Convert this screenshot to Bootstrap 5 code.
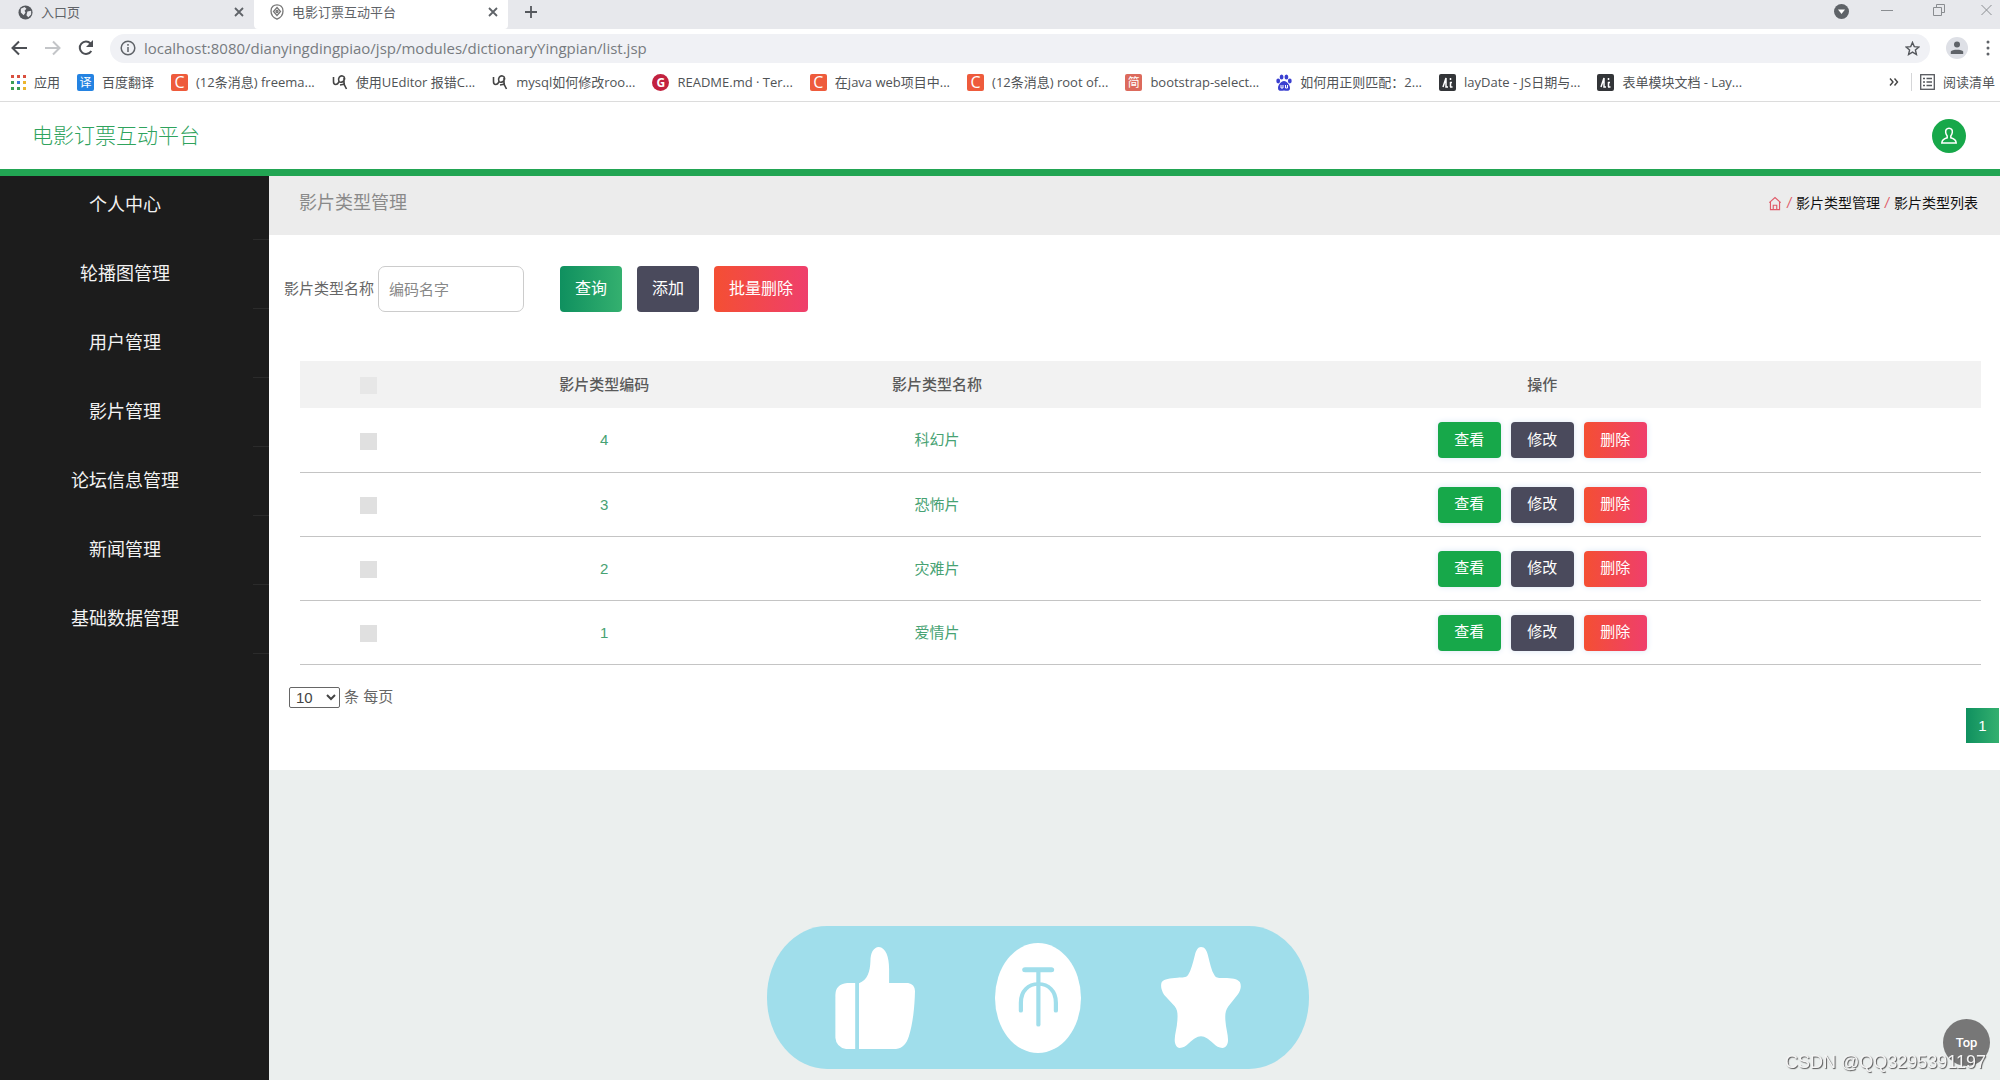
<!DOCTYPE html>
<html lang="zh-CN">
<head>
<meta charset="utf-8">
<meta name="viewport" content="width=device-width, initial-scale=1">
<title>电影订票互动平台</title>
<link href="https://cdn.jsdelivr.net/npm/bootstrap@5.3.0/dist/css/bootstrap.min.css" rel="stylesheet">
<style>
  body { font-family: "Liberation Sans", "Noto Sans CJK SC", sans-serif; font-size: 15px; line-height: 20px; color: #666; background: #ebefee; }
  svg { display: block; flex: none; }

  /* browser window */
  .browser { font-family: "Open Sans", "Noto Sans CJK SC", sans-serif; color: #5f6368; background: #fff; border-bottom: 1px solid #dcdcdc; }
  .browser button, .browser a { color: inherit; background: none; border: 0; padding: 0; text-decoration: none; }
  .tabstrip { height: 29px; background: #e7e8ec; padding-bottom: 5px; }
  .tab-item { width: 254px; height: 24px; font-size: 13px; padding: 0 9px 0 18px; }
  .tab-live { height: 29px; background: #fff; padding-bottom: 5px; border-radius: 0 0 4px 4px; }
  .toolbar { height: 38px; padding: 0 8px 0 10px; }
  .omnibox { height: 29px; background: #f0f1f5; border-radius: 15px; padding: 0 10px; margin-left: 16px; }
  .omnibox input { font-size: 15px; color: #777b80; background: none; border: 0; outline: 0; min-width: 0; padding: 0; }
  .browser .profile { width: 22px; height: 22px; border-radius: 50%; background: #dee0e6; }
  .bookmarks { height: 34px; padding: 0 5px 4px 11px; font-size: 13px; color: #505356; }
  .fav { width: 17px; height: 17px; border-radius: 2px; color: #fff; font-size: 12px; line-height: 17px; text-align: center; flex: none; }
  .fav-c { background: #ee5b3c; font-size: 16px; }
  .fav-y { background: #2483e2; }
  .fav-j { background: #dc6a5c; }
  .fav-g { background: #c2213f; border-radius: 50%; font-weight: 700; }
  .gap-bm { gap: 17px; }
  .bm-rule { width: 1px; height: 18px; background: #d5d6d8; }

  /* site header */
  .site-top { height: 74px; background: #fff; border-bottom: 7px solid #22a553; padding: 0 34px 0 32px; }
  .site-name { font-size: 21px; line-height: 28px; color: #2fa35d; text-decoration: none; font-weight: 300; }
  .avatar { width: 34px; height: 34px; border: 0; border-radius: 50%; background: #17a84a; }

  /* side menu */
  .side { width: 269px; background: #1c1c1c; flex: none; }
  .side a { display: block; font-size: 18px; line-height: 27px; padding: 21px 19px 21px 0; color: #f2f2f2; text-align: center; text-decoration: none; background: linear-gradient(#2b2b2b, #2b2b2b) right bottom / 16px 1px no-repeat; }
  .side li:first-child a { padding-top: 16px; }

  /* content */
  .title-bar { height: 59px; background: #ececec; padding: 0 22px 5px 30px; }
  .title-bar h1 { font-size: 18px; line-height: 24px; color: #8a8a8a; font-weight: 400; }
  .crumbs { font-size: 14px; color: #e05a68; gap: 5px; }
  .crumbs a, .crumbs span { color: #111; text-decoration: none; }
  .panel { background: #fff; }
  .search { padding: 31px 15px 0; }
  .search input { width: 146px; height: 46px; font-size: 15px; border-color: #ccc; border-radius: 7px; padding: 0 10px; }
  .search input::placeholder { color: #888; }
  .btn-tool { height: 46px; border: 0; border-radius: 4px; padding: 0 15px; font-size: 16px; color: #fff; }
  .btn-op { width: 63px; height: 36px; border: 0; border-radius: 4px; padding: 0; font-size: 15px; color: #fff; box-shadow: 0 0 6px #dbe6f4; }
  .gap-tool { gap: 15px; }
  .gap-op { gap: 10px; }
  .fill-query { background: linear-gradient(90deg, #0f905f, #34b06f); }
  .fill-dark { background: #4a4a5c; }
  .fill-red { background: linear-gradient(90deg, #f44f33, #ef3f6c); }
  .fill-green { background: #17a84a; }
  .list-wrap { padding: 49px 19px 0 31px; }
  .type-table { table-layout: fixed; margin: 0; text-align: center; vertical-align: middle; --bs-table-bg: transparent; }
  .type-table th { height: 47px; padding: 0; background: #f2f2f2; border: 0; color: #5a5a5a; font-weight: 500; vertical-align: middle; }
  .type-table td { height: 64px; padding: 1px 0 0; border-bottom: 1px solid #c4c4c4; color: #47a273; }
  .type-table .form-check-input { width: 17px; height: 17px; margin: 0; border: 0; border-radius: 0; background-color: #e0e0e0; vertical-align: middle; }
  .type-table th .form-check-input { background-color: #e7e7e7; }
  .c-check { width: 8.2%; }
  .c-data { width: 19.8%; }
  .pager { padding: 22px 1px 27px 20px; }
  .pager select { width: 51px; height: 21px; font-size: 15px; color: #444; background: #fff; border: 1px solid #666; border-radius: 2px; padding: 0 0 0 2px; }
  .page-no { width: 33px; height: 35px; line-height: 35px; color: #fff; text-align: center; text-decoration: none; }

  /* overlays */
  .reactions { left: 51.9%; bottom: 11px; transform: translateX(-50%); height: 143px; padding: 0 68px; gap: 80px; background: #a0deeb; border-radius: 60px / 71px; }
  .reactions button { border: 0; padding: 0; background: none; }
  .to-top { right: 10px; bottom: 14px; width: 47px; height: 47px; border: 0; border-radius: 50%; background: #777; color: #fff; font: 500 13px/20px Roboto, sans-serif; }
  .credit { right: 14px; bottom: 6px; font-size: 18px; line-height: 24px; color: #f4f4f4; text-shadow: 1px 1px 1px #555; }
</style>
</head>
<body class="d-flex flex-column min-vh-100">

<div class="browser">
  <div class="tabstrip d-flex align-items-start">
    <div class="tab-item d-flex align-items-center">
      <svg width="15" height="15" viewBox="0 0 16 16"><circle cx="8" cy="8" r="7.5" fill="#55585d"/><path d="M3 4l4-2 2 2-2 2 1 2-2 3-3-3zM10 7l4-1v4l-3 3-2-2z" fill="#e7e8ec"/></svg>
      <span class="ms-2 me-auto">入口页</span>
      <button aria-label="关闭"><svg width="12" height="12" viewBox="0 0 12 12" stroke="#5f6368" stroke-width="1.8"><path d="M2 2l8 8M10 2l-8 8"/></svg></button>
    </div>
    <div class="tab-item tab-live d-flex align-items-center ps-3">
      <svg width="14" height="16" viewBox="0 0 14 16" fill="none" stroke="#777" stroke-width="1.3"><path d="M7 .8c3 0 6 2 6 6.200 0 4-3 7-6 8.200C4 14 1 11 1 7 1 2.800 4 .8 7 .8z"/><path d="M7 3.500L10.500 7.500 7 11.500 3.500 7.500z"/><circle cx="7" cy="7.500" r="1"/></svg>
      <span class="ms-2 me-auto">电影订票互动平台</span>
      <button aria-label="关闭"><svg width="12" height="12" viewBox="0 0 12 12" stroke="#5f6368" stroke-width="1.800"><path d="M2 2l8 8M10 2l-8 8"/></svg></button>
    </div>
    <button class="ms-3 mt-1" aria-label="新标签页"><svg width="14" height="16" viewBox="0 0 14 16" stroke="#55585d" stroke-width="1.800"><path d="M7 2v12M1 8h12"/></svg></button>
    <div class="ms-auto d-flex align-items-center pe-2">
      <button class="me-4 pt-1" aria-label="搜索标签页"><svg width="15" height="15" viewBox="0 0 15 15"><circle cx="7.500" cy="7.500" r="7.500" fill="#5f6368"/><path d="M4 5.500h7L7.500 10z" fill="#fff"/></svg></button>
      <button class="ms-2 me-4" aria-label="最小化"><svg width="12" height="16" viewBox="0 0 12 16" stroke="#8a8d91"><path d="M0 8.500h12"/></svg></button>
      <button class="mx-3" aria-label="还原"><svg width="12" height="12" viewBox="0 0 12 12" fill="none" stroke="#8a8d91"><path d="M.5 3.500h8v8h-8zM3.500 3V.5h8v8H9"/></svg></button>
      <button class="ms-3 ps-1" aria-label="关闭窗口"><svg width="11" height="12" viewBox="0 0 11 12" stroke="#8a8d91"><path d="M.5 1l10 10M10.500 1l-10 10"/></svg></button>
    </div>
  </div>

  <div class="toolbar d-flex align-items-center">
    <button aria-label="后退"><svg width="18" height="16" viewBox="0 0 18 16" fill="none" stroke="#4c4f54" stroke-width="2"><path d="M17 8H3M9 1.500L2.500 8 9 14.500"/></svg></button>
    <button class="ms-3" aria-label="前进"><svg width="18" height="16" viewBox="0 0 18 16" fill="none" stroke="#c3c5c8" stroke-width="2"><path d="M1 8h14M9 1.500L15.500 8 9 14.500"/></svg></button>
    <button class="ms-3" aria-label="刷新"><svg width="16" height="16" viewBox="0 0 16 16"><path d="M13.300 11A6.200 6.200 0 1 1 12.500 3.500" fill="none" stroke="#4c4f54" stroke-width="2"/><path d="M15 0v7H8z" fill="#4c4f54"/></svg></button>
    <div class="omnibox d-flex align-items-center flex-grow-1">
      <svg width="16" height="16" viewBox="0 0 16 16" fill="none" stroke="#5f6368" stroke-width="1.500"><circle cx="8" cy="8" r="6.800"/><path d="M8 7v5M8 4v1.700"/></svg>
      <input class="flex-grow-1 ms-2" aria-label="地址栏" value="localhost:8080/dianyingdingpiao/jsp/modules/dictionaryYingpian/list.jsp">
      <button aria-label="收藏"><svg width="15" height="15" viewBox="0 0 16 16" fill="none" stroke="#55585d" stroke-width="1.500"><path d="M8 1.500l1.900 4.500 4.900.4-3.700 3.200 1.100 4.800L8 11.900l-4.200 2.500 1.100-4.800L1.200 6.400 6.100 6z"/></svg></button>
    </div>
    <button class="profile ms-3 d-flex align-items-center justify-content-center" aria-label="用户"><svg width="14" height="14" viewBox="0 0 14 14" fill="#5f6368"><circle cx="7" cy="3.500" r="3"/><path d="M.8 13v-2.500C2 8 12 8 13.200 10.500V13z"/></svg></button>
    <button class="ms-3" aria-label="菜单"><svg width="8" height="16" viewBox="0 0 8 16" fill="#5f6368"><circle cx="4" cy="2" r="1.500"/><circle cx="4" cy="8" r="1.500"/><circle cx="4" cy="14" r="1.500"/></svg></button>
  </div>

  <div class="bookmarks d-flex align-items-center text-nowrap gap-bm">
    <a href="#" class="d-flex align-items-center"><svg class="me-2" width="15" height="15" viewBox="0 0 15 15"><g fill="#d9503f"><path d="M0 0h3v3H0zM6 0h3v3H6zM12 0h3v3h-3z"/></g><path d="M0 6h3v3H0zM0 12h3v3H0z" fill="#3c9c57"/><path d="M6 6h3v3H6z" fill="#3b78dc"/><path d="M6 12h3v3H6z" fill="#3c9c57"/><path d="M12 6h3v3h-3zM12 12h3v3h-3z" fill="#ecb52c"/></svg>应用</a>
    <a href="#" class="d-flex align-items-center"><span class="fav fav-y me-2">译</span>百度翻译</a>
    <a href="#" class="d-flex align-items-center"><span class="fav fav-c me-2">C</span>(12条消息) freema...</a>
    <a href="#" class="d-flex align-items-center"><svg class="me-2" width="16" height="17" viewBox="0 0 16 17" fill="none" stroke="#444" stroke-width="1.600"><path d="M1.500 3v4.500c0 4 4 4 5.500 0M7 7.500C5.500 4 8 1.500 10.500 2s3 4 .5 5.500-4 0-4 0M12 4v6l2.500 5M8 11l5-1"/></svg>使用UEditor 报错C...</a>
    <a href="#" class="d-flex align-items-center"><svg class="me-2" width="16" height="17" viewBox="0 0 16 17" fill="none" stroke="#444" stroke-width="1.600"><path d="M1.500 3v4.500c0 4 4 4 5.500 0M7 7.500C5.500 4 8 1.500 10.500 2s3 4 .5 5.500-4 0-4 0M12 4v6l2.500 5M8 11l5-1"/></svg>mysql如何修改roo...</a>
    <a href="#" class="d-flex align-items-center"><span class="fav fav-g me-2">G</span>README.md · Ter...</a>
    <a href="#" class="d-flex align-items-center"><span class="fav fav-c me-2">C</span>在java web项目中...</a>
    <a href="#" class="d-flex align-items-center"><span class="fav fav-c me-2">C</span>(12条消息) root of...</a>
    <a href="#" class="d-flex align-items-center"><span class="fav fav-j me-2">简</span>bootstrap-select...</a>
    <a href="#" class="d-flex align-items-center"><svg class="me-2" width="16" height="17" viewBox="0 0 16 17" fill="#3a3fd0"><ellipse cx="2.200" cy="7" rx="1.900" ry="2.400"/><ellipse cx="5.600" cy="3" rx="1.900" ry="2.600"/><ellipse cx="10.400" cy="3" rx="1.900" ry="2.600"/><ellipse cx="13.800" cy="7" rx="1.900" ry="2.400"/><path d="M8 7c3 0 6 4 6 7 0 4-4 2.500-6 2.500S2 18 2 14c0-3 3-7 6-7z"/><path d="M5 11v3h2v-3M9.500 11v3h2v-3" stroke="#fff" fill="none"/></svg>如何用正则匹配：2...</a>
    <a href="#" class="d-flex align-items-center"><svg class="me-2" width="17" height="17" viewBox="0 0 17 17"><rect width="17" height="17" rx="2" fill="#333538"/><path d="M4 13l3-9v9h2M11.500 4v2M11 8.500h2M11 13h2.500M11.500 8v5" fill="none" stroke="#fff" stroke-width="1.500"/></svg>layDate - JS日期与...</a>
    <a href="#" class="d-flex align-items-center"><svg class="me-2" width="17" height="17" viewBox="0 0 17 17"><rect width="17" height="17" rx="2" fill="#333538"/><path d="M4 13l3-9v9h2M11.500 4v2M11 8.500h2M11 13h2.500M11.500 8v5" fill="none" stroke="#fff" stroke-width="1.500"/></svg>表单模块文档 - Lay...</a>
    <div class="ms-auto d-flex align-items-center">
      <button class="me-1" aria-label="更多书签"><svg width="10" height="10" viewBox="0 0 10 10" fill="none" stroke="#444" stroke-width="1.400"><path d="M1 1.500L4 5 1 8.500M5.500 1.500l3 3.500-3 3.500"/></svg></button>
      <span class="bm-rule mx-2"></span>
      <button class="d-flex align-items-center"><svg class="me-2" width="15" height="16" viewBox="0 0 15 16" fill="none" stroke="#55585d" stroke-width="1.300"><rect x=".7" y=".7" width="13.600" height="14.600"/><path d="M3 4.500h2M6.500 4.500H12M3 8h2M6.500 8H12M3 11.500h2M6.500 11.500H12"/></svg>阅读清单</button>
    </div>
  </div>
</div>

<header class="site-top d-flex align-items-center justify-content-between">
  <a class="site-name" href="#">电影订票互动平台</a>
  <button class="avatar d-flex align-items-center justify-content-center p-0" aria-label="个人中心"><svg width="18" height="18" viewBox="0 0 18 18" fill="none" stroke="#fff" stroke-width="1.500"><path d="M9 1.200c2.600 0 3.600 2 3.300 4.300-.2 1.700-1 2.700-1.500 3.500v1.800c2.500.6 5.200 1.800 5.400 5.200H1.800c.2-3.400 2.900-4.600 5.400-5.200V9c-.5-.8-1.300-1.800-1.500-3.500C5.400 3.200 6.400 1.200 9 1.200z"/></svg></button>
</header>

<div class="d-flex flex-grow-1">
  <nav class="side">
    <ul class="list-unstyled m-0">
      <li><a href="#">个人中心</a></li>
      <li><a href="#">轮播图管理</a></li>
      <li><a href="#">用户管理</a></li>
      <li><a href="#">影片管理</a></li>
      <li><a href="#">论坛信息管理</a></li>
      <li><a href="#">新闻管理</a></li>
      <li><a href="#">基础数据管理</a></li>
    </ul>
  </nav>

  <main class="flex-grow-1">
    <div class="title-bar d-flex align-items-center justify-content-between">
      <h1 class="m-0">影片类型管理</h1>
      <div class="crumbs d-flex align-items-center">
        <a href="#" aria-label="首页"><svg width="14" height="15" viewBox="0 0 16 16" fill="none" stroke="#e05a68" stroke-width="1.300"><path d="M1.500 7L8 1.200 14.500 7M2.800 6v9h10.400V6M6 15v-5h4v5"/></svg></a>
        <i>/</i><a href="#">影片类型管理</a><i>/</i><span>影片类型列表</span>
      </div>
    </div>

    <section class="panel">
      <form class="search d-flex align-items-center">
        <label for="typeName">影片类型名称</label>
        <input id="typeName" class="form-control ms-1" type="text" placeholder="编码名字">
        <div class="d-flex gap-tool ms-4 ps-2">
          <button type="button" class="btn btn-tool fill-query ms-1">查询</button>
          <button type="button" class="btn btn-tool fill-dark">添加</button>
          <button type="button" class="btn btn-tool fill-red">批量删除</button>
        </div>
      </form>

      <div class="list-wrap">
        <table class="table type-table">
          <colgroup><col class="c-check"><col class="c-data"><col class="c-data"><col></colgroup>
          <thead>
            <tr><th><input class="form-check-input" type="checkbox" aria-label="全选"></th><th>影片类型编码</th><th>影片类型名称</th><th>操作</th></tr>
          </thead>
          <tbody>
            <tr><td><input class="form-check-input" type="checkbox" aria-label="选择 4"></td><td>4</td><td>科幻片</td><td><div class="d-flex justify-content-center gap-op"><button class="btn btn-op fill-green">查看</button><button class="btn btn-op fill-dark">修改</button><button class="btn btn-op fill-red">删除</button></div></td></tr>
            <tr><td><input class="form-check-input" type="checkbox" aria-label="选择 3"></td><td>3</td><td>恐怖片</td><td><div class="d-flex justify-content-center gap-op"><button class="btn btn-op fill-green">查看</button><button class="btn btn-op fill-dark">修改</button><button class="btn btn-op fill-red">删除</button></div></td></tr>
            <tr><td><input class="form-check-input" type="checkbox" aria-label="选择 2"></td><td>2</td><td>灾难片</td><td><div class="d-flex justify-content-center gap-op"><button class="btn btn-op fill-green">查看</button><button class="btn btn-op fill-dark">修改</button><button class="btn btn-op fill-red">删除</button></div></td></tr>
            <tr><td><input class="form-check-input" type="checkbox" aria-label="选择 1"></td><td>1</td><td>爱情片</td><td><div class="d-flex justify-content-center gap-op"><button class="btn btn-op fill-green">查看</button><button class="btn btn-op fill-dark">修改</button><button class="btn btn-op fill-red">删除</button></div></td></tr>
          </tbody>
        </table>
      </div>

      <div class="pager d-flex flex-column">
        <div class="d-flex align-items-center gap-1">
          <select id="pageSize"><option>10</option><option>25</option><option>50</option></select>
          <label for="pageSize">条 每页</label>
        </div>
        <a class="page-no fill-query align-self-end" href="#">1</a>
      </div>
    </section>
  </main>
</div>

<div class="reactions position-fixed d-flex align-items-center">
  <button aria-label="点赞"><svg width="80" height="102" viewBox="248 138 210 306" preserveAspectRatio="none" fill="#fff"><path d="M301 246H280q-31 4-31 36V410q2 28 28 34h24zM311 444V247c22-10 29-34 30-66 0-26 8-42 22-43 18 1 27 30 27 66V246h50q17 3 18 24c-1 50-6 100-16 136-6 22-16 36-34 38z"/></svg></button>
  <button aria-label="投币"><svg width="86" height="110" viewBox="667 129 226 330" preserveAspectRatio="none"><ellipse cx="780" cy="294" rx="113" ry="165" fill="#fff"/><g fill="none" stroke="#a0deeb" stroke-linecap="round"><path d="M746 209h69" stroke-width="15"/><path d="M781 212v162" stroke-width="11"/><path d="M735 332v-24c0-36 20-56 46-56s46 20 46 56v24" stroke-width="11"/></g></svg></button>
  <button aria-label="收藏"><svg width="80" height="101" viewBox="1102 143 210 302" preserveAspectRatio="none" fill="#fff"><path d="M1207 143c10 0 15 10 18 24 6 26 9 46 17 60 5 10 12 9 26 9 20 0 34 2 41 12 5 12 2 24-6 38l-24 34c-8 12-9 24-8 42 1 22 7 42 7 58 0 14-5 24-15 25-9 0-16-5-24-14-12-12-21-21-32-21s-20 9-32 21c-8 9-15 14-24 14-8-1-13-11-13-25 0-16 6-36 7-58 1-18 1-30-7-42l-28-34c-7-14-10-26-6-38 7-10 21-11 41-13 14-1 22 1 28-8 8-14 12-34 18-60 3-14 8-24 16-24z"/></svg></button>
</div>

<button class="to-top position-fixed">Top</button>
<div class="credit position-fixed">CSDN @QQ3295391197</div>

<script src="https://cdn.jsdelivr.net/npm/bootstrap@5.3.0/dist/js/bootstrap.bundle.min.js"></script>
</body>
</html>
